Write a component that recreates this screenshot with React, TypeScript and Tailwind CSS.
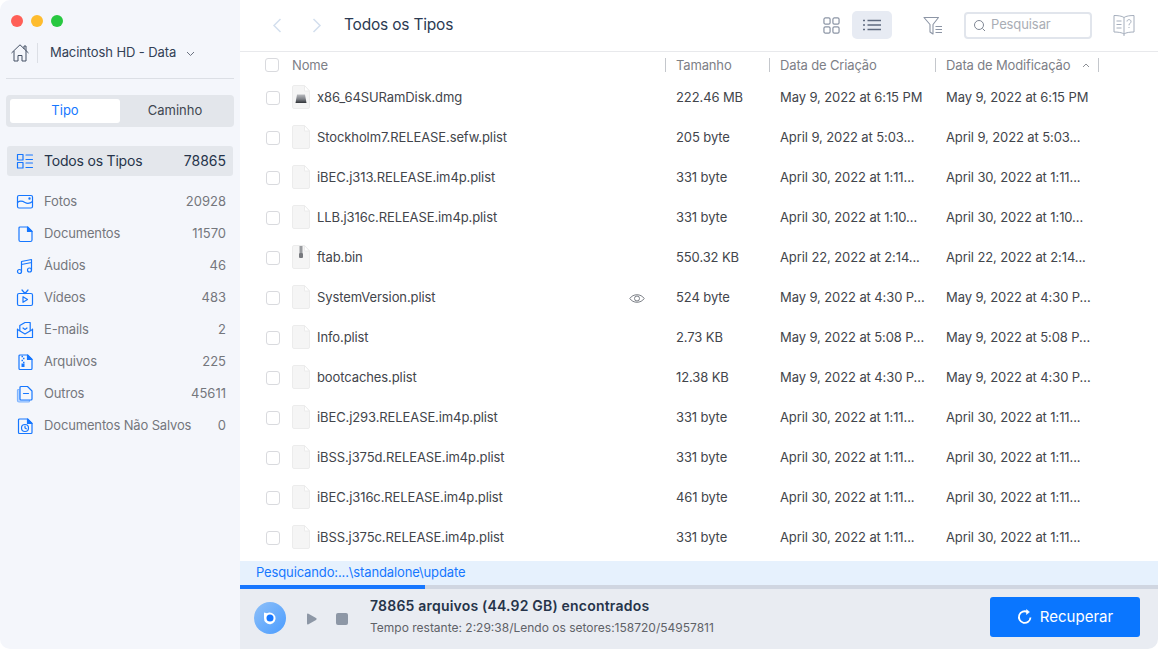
import React from "react";

const blue = "#1677ff";

const I = ({ children, w = 18, h = 18, vb }: { children: React.ReactNode; w?: number; h?: number; vb?: string }) => (
  <svg width={w} height={h} viewBox={vb ?? `0 0 ${w} ${h}`} fill="none" stroke={blue} strokeWidth="1.2" strokeLinejoin="round" strokeLinecap="round" className="shrink-0">
    {children}
  </svg>
);

const icons: Record<string, React.ReactNode> = {
  all: (
    <I>
      <rect x="1.5" y="2.5" width="5.5" height="5.5" />
      <rect x="1.5" y="10.5" width="5.5" height="5.5" />
      <path d="M10 3h6.5M10 7.5h6.5M10 11h6.5M10 15.5h6.5" />
    </I>
  ),
  foto: (
    <I>
      <rect x="1.5" y="2.5" width="15" height="12.5" rx="1.5" />
      <path d="M1.5 9.5c3-2.5 5-1.5 7.5 0s5 1 7.5-1" />
      <circle cx="13.5" cy="5.5" r=".6" />
    </I>
  ),
  doc: (
    <I>
      <path d="M3 3a1 1 0 0 1 1-1h7.5L16 6.5V15a1.5 1.5 0 0 1-1.5 1.5H4.500A1.500 1.500 0 0 1 3 15z" />
      <path d="M11.500 2L16 6.500H11.500z" fill={blue} />
    </I>
  ),
  audio: (
    <I>
      <circle cx="3.500" cy="14.500" r="2" />
      <circle cx="13.500" cy="13" r="2" />
      <path d="M5.500 14.500V4.500L15.500 2.500V13M5.500 7.500l10-2" />
    </I>
  ),
  video: (
    <I>
      <rect x="1.500" y="4.500" width="15" height="12" rx="1.500" />
      <path d="M6 1l3 3.500L12 1" />
      <path d="M7 7.700v5.600l4.500-2.800z" />
    </I>
  ),
  mail: (
    <I>
      <path d="M1.500 8v8.500h15V8" />
      <path d="M1.500 8.500L9 13l7.500-4.500" />
      <path d="M3.800 9.500V4.500L9 1.500h5.200v8" />
      <path d="M7 7l2 1.500 2-1.500" />
    </I>
  ),
  zip: (
    <I>
      <path d="M3 3a1 1 0 0 1 1-1h7.500L16 6.500V15.500a1 1 0 0 1-1 1H4a1 1 0 0 1-1-1z" />
      <path d="M11.500 2L16 6.500H11.500z" fill={blue} />
      <path d="M5.500 3.500h1.500M7 5.500h1.500M5.500 7.500h1.500M7 9.500h1.500" strokeWidth="1.500" strokeLinecap="butt" />
      <rect x="5.500" y="10.500" width="3" height="3.500" fill={blue} stroke="none" />
    </I>
  ),
  other: (
    <I>
      <path d="M3 4.500h-.5A1 1 0 0 0 1.500 5.500V15.500A1.500 1.500 0 0 0 3 17h9.500a1 1 0 0 0 1-1v-.5" stroke="#7fb4ff" fill="#bcd8ff" />
      <path d="M4 2.500a1 1 0 0 1 1-1h6.500L16 6V14a1 1 0 0 1-1 1H5a1 1 0 0 1-1-1z" fill="#f4f6fb" />
      <path d="M7.500 8.500h5" />
    </I>
  ),
  unsaved: (
    <I>
      <path d="M2.500 3a1 1 0 0 1 1-1h8L16 6.500V15.500a1 1 0 0 1-1 1H3.500a1 1 0 0 1-1-1z" />
      <path d="M11.500 2L16 6.500H11.500z" fill={blue} />
      <circle cx="9" cy="11" r="3.500" />
      <path d="M9 9.200V11l1.300.8" />
    </I>
  ),
};

const cats = [
  ["foto", "Fotos", "20928"],
  ["doc", "Documentos", "11570"],
  ["audio", "Áudios", "46"],
  ["video", "Vídeos", "483"],
  ["mail", "E-mails", "2"],
  ["zip", "Arquivos", "225"],
  ["other", "Outros", "45611"],
  ["unsaved", "Documentos Não Salvos", "0"],
];

const rows: [string, string, string, string?][] = [
  ["x86_64SURamDisk.dmg", "222.46 MB", "May 9, 2022 at 6:15 PM", "dmg"],
  ["Stockholm7.RELEASE.sefw.plist", "205 byte", "April 9, 2022 at 5:03..."],
  ["iBEC.j313.RELEASE.im4p.plist", "331 byte", "April 30, 2022 at 1:11..."],
  ["LLB.j316c.RELEASE.im4p.plist", "331 byte", "April 30, 2022 at 1:10..."],
  ["ftab.bin", "550.32 KB", "April 22, 2022 at 2:14...", "zip"],
  ["SystemVersion.plist", "524 byte", "May 9, 2022 at 4:30 P...", "eye"],
  ["Info.plist", "2.73 KB", "May 9, 2022 at 5:08 P..."],
  ["bootcaches.plist", "12.38 KB", "May 9, 2022 at 4:30 P..."],
  ["iBEC.j293.RELEASE.im4p.plist", "331 byte", "April 30, 2022 at 1:11..."],
  ["iBSS.j375d.RELEASE.im4p.plist", "331 byte", "April 30, 2022 at 1:11..."],
  ["iBEC.j316c.RELEASE.im4p.plist", "461 byte", "April 30, 2022 at 1:11..."],
  ["iBSS.j375c.RELEASE.im4p.plist", "331 byte", "April 30, 2022 at 1:11..."],
];

const FileIcon = ({ kind }: { kind?: string }) => (
  <svg width="18" height="24" viewBox="0 0 18 24" className="shrink-0">
    <defs>
      <linearGradient id="dmgg" x1="0" y1="0" x2="0" y2="1">
        <stop offset="0" stopColor="#b9bbbf" />
        <stop offset=".55" stopColor="#7d8086" />
        <stop offset="1" stopColor="#2f3237" />
      </linearGradient>
    </defs>
    <path d="M.5 2a1.500 1.500 0 0 1 1.500-1.500h10.500L17.500 6v16a1.500 1.500 0 0 1-1.500 1.500H2A1.500 1.500 0 0 1 .5 22z" fill="#f5f5f5" stroke="#ececec" />
    <path d="M12.500.5V6h5z" fill="#fff" stroke="#ececec" />
    {kind === "dmg" && <path d="M5 9.500h8l1.500 8.500h-11z" fill="url(#dmgg)" />}
    {kind === "zip" && (
      <>
        <rect x="7.500" y="1" width="3" height="7" fill="#9a9ca0" />
        <rect x="7" y="8" width="4" height="5" rx="1" fill="#77797e" />
      </>
    )}
  </svg>
);

const Check = () => <span className="block w-[14px] h-[14px] rounded-[3px] border border-[#d9dade] bg-white shrink-0" />;

const Sep = () => <span className="block w-px h-[14px] bg-[#c4c7cc] shrink-0" />;

export default function App() {
  return (
    <div className="w-[1158px] h-[649px] bg-white overflow-hidden" style={{ fontFamily: "Inter, 'Liberation Sans', sans-serif" }}>
      <div className="w-full h-full flex rounded-[10px] overflow-hidden bg-white">
        <aside className="w-[240px] shrink-0 bg-[#f4f6fb] px-[6px] flex flex-col">
          <div className="flex gap-2 pt-[15px] pl-[5px] h-[36px]">
            <span className="w-3 h-3 rounded-full bg-[#ff5f57]" />
            <span className="w-3 h-3 rounded-full bg-[#febc2e]" />
            <span className="w-3 h-3 rounded-full bg-[#28c840]" />
          </div>
          <div className="h-[43px] border-b border-[#dcdfe5] flex items-center pl-[5px] pb-[10px] pt-[2px]">
            <svg width="18" height="18" viewBox="0 0 18 18" fill="none" stroke="#445064" strokeWidth="1" strokeLinejoin="round">
              <path d="M.5 9L9 .8 17.500 9M3 7v10h4v-5.500h4V17h4V7M13 5V2h2v5" />
            </svg>
            <span className="w-px h-5 bg-[#dcdfe5] ml-2 mr-3" />
            <span className="text-[13px] text-[#334155] tracking-[-0.1px]">Macintosh HD - Data</span>
            <svg width="9" height="6" viewBox="0 0 9 6" fill="none" stroke="#6b7280" className="ml-[10px] mt-[2px]"><path d="M1 1l3.500 3.500L8 1" /></svg>
          </div>
          <div className="mt-4 h-8 rounded-[4px] bg-[#e3e6eb] p-1 flex text-[13px] leading-[23px]">
            <div className="w-[110px] rounded-[3px] bg-white text-center text-[#1677ff]">Tipo</div>
            <div className="w-[110px] text-center text-[#3f4650]">Caminho</div>
          </div>
          <div className="mt-[19px] mx-px h-[30px] rounded-[3px] bg-[#e4e7ec] flex items-center pl-[9px] pr-[7px] pb-[2px] text-[#26344a] text-[14px]">
            <span className="mt-px">{icons.all}</span>
            <span className="ml-[10px] flex-1 tracking-[-0.2px]">Todos os Tipos</span>
            <span>78865</span>
          </div>
          <div className="mt-[10px] flex flex-col">
            {cats.map(([ic, label, n]) => (
              <div key={label} className="h-8 mx-px flex items-center pl-[9px] pr-[7px] text-[13px] text-[#74777d]">
                {icons[ic]}
                <span className="ml-[10px] flex-1 tracking-[-0.15px]">{label}</span>
                <span>{n}</span>
              </div>
            ))}
          </div>
        </aside>

        <main className="flex-1 min-w-0 flex flex-col">
          <header className="h-[52px] shrink-0 border-b border-[#e8e9ec] flex items-center pl-[32px] pb-px">
            <svg width="10" height="15" viewBox="0 0 10 15" fill="none" stroke="#d3dfee" strokeWidth="1.500"><path d="M8.500 1L2 7.500 8.500 14" /></svg>
            <svg width="10" height="15" viewBox="0 0 10 15" fill="none" stroke="#d3dfee" strokeWidth="1.500" className="ml-[30px]"><path d="M1.500 1L8 7.500 1.500 14" /></svg>
            <span className="ml-[22px] text-[15.500px] text-[#2b3a52] tracking-[-0.2px]">Todos os Tipos</span>
            <div className="flex-1" />
            <svg width="17" height="17" viewBox="0 0 18 18" fill="none" stroke="#8c95a5" strokeWidth="1.300">
              <rect x="1" y="1" width="6.500" height="6.500" rx="1.500" /><rect x="10.500" y="1" width="6.500" height="6.500" rx="1.500" />
              <rect x="1" y="10.500" width="6.500" height="6.500" rx="1.500" /><rect x="10.500" y="10.500" width="6.500" height="6.500" rx="1.500" />
            </svg>
            <div className="ml-[12px] w-10 h-7 rounded-[5px] bg-[#e7ebf3] flex items-center justify-center">
              <svg width="18" height="12" viewBox="0 0 18 12" fill="none" stroke="#5f6b80" strokeWidth="1.500">
                <path d="M0 1.500h2M0 6h2M0 10.500h2M4.500 1.500H18M4.500 6H18M4.500 10.500H18" />
              </svg>
            </div>
            <svg width="20" height="19" viewBox="0 0 20 19" fill="none" stroke="#8c95a5" strokeWidth="1.100" strokeLinejoin="round" className="ml-[31px]">
              <path d="M1 1.500h14.500L10 8.500V18l-3-2V8.500z" />
              <path d="M12.500 10.500H19M12.500 13.500H19M12.500 16.500H19" />
            </svg>
            <div className="ml-[21px] w-[128px] h-[27px] rounded-[4px] border-2 border-[#e1e5ec] flex items-center pl-[7px] text-[13px] tracking-[-0.1px] text-[#a9adb5]">
              <svg width="13" height="13" viewBox="0 0 13 13" fill="none" stroke="#7f8794" strokeWidth="1"><circle cx="6" cy="6" r="4.500" /><path d="M9.500 9.500L12 12" /></svg>
              <span className="ml-[5px]">Pesquisar</span>
            </div>
            <svg width="24" height="24" viewBox="0 0 24 24" fill="none" stroke="#a5aebc" strokeWidth="1" strokeLinejoin="round" className="ml-[20px]">
              <path d="M12 4.500C10 3 6 2.500 2 2.500V19c4 0 8 .5 10 2 2-1.500 6-2 10-2V2.500c-4 0-8 .5-10 2zM12 4.500V23" />
              <path d="M4.500 8h5M4.500 11.500h5M4.500 15h5" />
              <path d="M15 8.500c0-2.500 4-2.500 4 0 0 1.800-2 1.800-2 3.800M17 14v1" />
            </svg>
            <div className="w-[22px]" />
          </header>

          <div className="h-[26px] shrink-0 flex items-center text-[13px] text-[#7d8087] tracking-[-0.15px]">
            <span className="ml-[25px]"><Check /></span>
            <span className="ml-[13px] w-[373px] mt-[2px]">Nome</span>
            <Sep />
            <span className="ml-[10px] w-[93px] mt-[2px]">Tamanho</span>
            <Sep />
            <span className="ml-[10px] w-[155px] mt-[2px]">Data de Criação</span>
            <Sep />
            <span className="ml-[10px] w-[136px] mt-[2px]">Data de Modificação</span>
            <svg width="8" height="5" viewBox="0 0 8 5" fill="none" stroke="#8c8f95" className="mr-[8px]"><path d="M1 4l3-3 3 3" /></svg>
            <Sep />
          </div>

          <div className="flex-1 min-h-0 overflow-hidden">
            {rows.map(([name, size, date, kind]) => (
              <div key={name} className="h-10 flex items-center text-[13px] text-[#42454b] tracking-[-0.1px]">
                <span className="ml-[26px] mb-px"><Check /></span>
                <span className="ml-3 mb-[2px]"><FileIcon kind={kind} /></span>
                <span className="ml-[7px] w-[312px] whitespace-nowrap">{name}</span>
                <span className="w-[47px] flex justify-start">
                  {kind === "eye" && (
                    <svg width="16" height="11" viewBox="0 0 16 11" fill="none" stroke="#7b7f86" strokeWidth="1"><path d="M.8 5.500C4 .5 12 .5 15.200 5.500 12 10.500 4 10.500.8 5.500z" /><circle cx="8" cy="5.500" r="2.500" /></svg>
                  )}
                </span>
                <span className="w-[104px]">{size}</span>
                <span className="w-[166px] whitespace-nowrap">{date}</span>
                <span className="whitespace-nowrap">{date}</span>
              </div>
            ))}
          </div>

          <div className="h-6 shrink-0 bg-[#e6f1fd] flex items-center pl-4 text-[13px] tracking-[-0.13px] text-[#1677ff]">Pesquicando:...\standalone\update</div>
          <div className="h-1 shrink-0 bg-[#d0d6e1]"><div className="h-full w-[185px] bg-[#1677ff]" /></div>
          <footer className="h-[60px] shrink-0 bg-[#e9ecf2] flex items-center pl-[14px] pr-[18px]">
            <svg width="32" height="32" viewBox="0 0 32 32" className="mb-[2px]">
              <defs><linearGradient id="d" x1="0" y1="0" x2="1" y2="1"><stop offset="0" stopColor="#8fc0f8" /><stop offset="1" stopColor="#4a9cff" /></linearGradient></defs>
              <circle cx="16" cy="16" r="16" fill="url(#d)" />
              <path d="M10 10.500l3 .8a5.800 5.800 0 1 1-3 4.700z" fill="#fff" />
              <circle cx="16" cy="16" r="3.500" fill="#1677ff" />
            </svg>
            <svg width="11" height="12" viewBox="0 0 11 12" className="ml-[20px] mb-[1px]"><path d="M1 1.500a1 1 0 0 1 1.500-.8l7.500 4.400a1 1 0 0 1 0 1.800L2.500 11.300A1 1 0 0 1 1 10.500z" fill="#8d97a6" /></svg>
            <span className="ml-[19px] mb-[1px] w-3 h-3 rounded-[2px] bg-[#8d97a6]" />
            <div className="ml-[22px] flex-1 mb-[5px]">
              <div className="text-[14px] leading-[18px] font-semibold tracking-[0.2px] text-[#26344a]">78865 arquivos (44.92 GB) encontrados</div>
              <div className="mt-[5px] text-[12px] leading-[16px] text-[#5f6268]">Tempo restante: 2:29:38/Lendo os setores:158720/54957811</div>
            </div>
            <button className="w-[150px] h-10 rounded-[3px] bg-[#0a76ff] text-white text-[15px] flex items-center justify-center gap-[7px] mb-1">
              <svg width="16" height="16" viewBox="0 0 16 16" fill="none" stroke="#fff" strokeWidth="1.800"><path d="M13.500 8.500A5.800 5.800 0 1 1 10.500 3" /><path d="M9.500 .5L12.500 3 9.500 5.500z" fill="#fff" strokeWidth=".5" /></svg>
              Recuperar
            </button>
          </footer>
        </main>
      </div>
    </div>
  );
}
